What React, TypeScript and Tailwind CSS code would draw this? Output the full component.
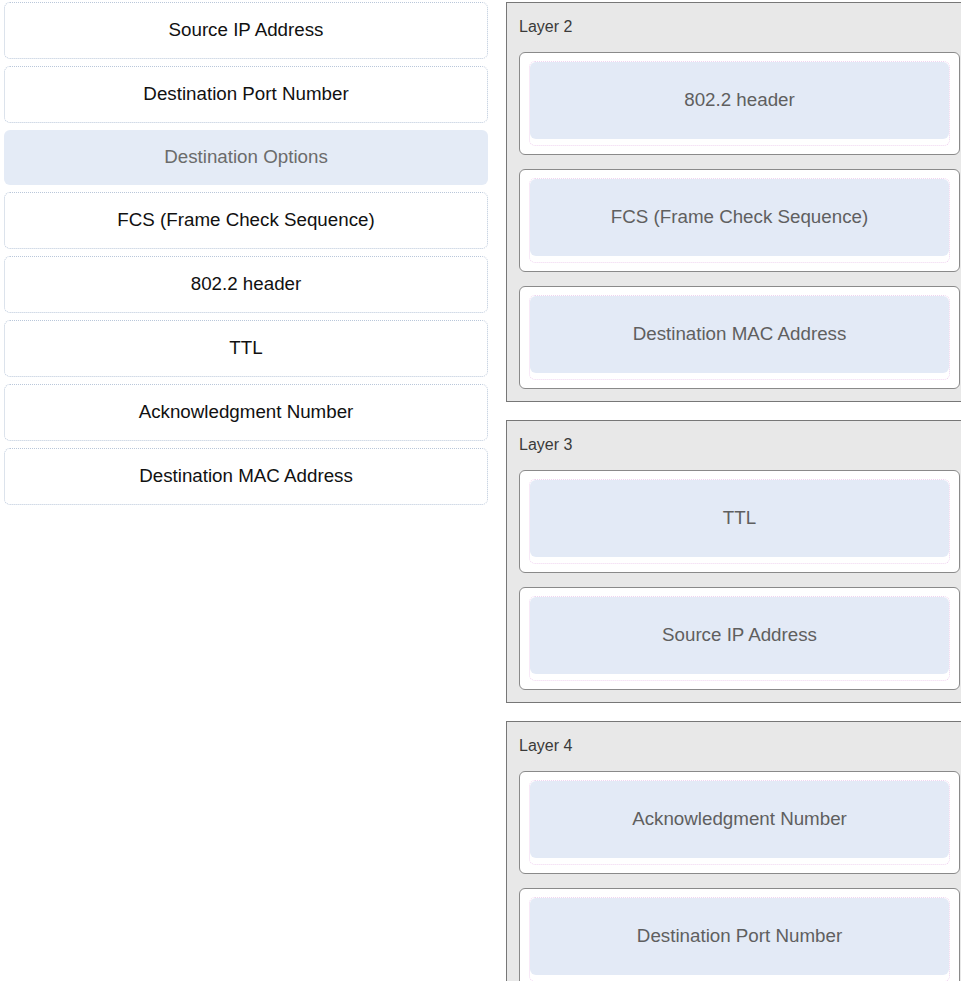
import React from "react";

const sourceItems = [
  { label: "Source IP Address" },
  { label: "Destination Port Number" },
  { label: "Destination Options", placed: true },
  { label: "FCS (Frame Check Sequence)" },
  { label: "802.2 header" },
  { label: "TTL" },
  { label: "Acknowledgment Number" },
  { label: "Destination MAC Address" },
];

const layers = [
  { name: "Layer 2", items: ["802.2 header", "FCS (Frame Check Sequence)", "Destination MAC Address"] },
  { name: "Layer 3", items: ["TTL", "Source IP Address"] },
  { name: "Layer 4", items: ["Acknowledgment Number", "Destination Port Number"] },
];

function DropCard({ label }: { label: string }) {
  return (
    <div className="h-[103px] rounded-[6px] border border-[#8a8a8a] bg-white px-[9px] pt-[8px]">
      <div className="h-[85px] rounded-[6px] border border-dotted border-[#f0d4f0]">
        <div className="flex h-[77px] items-center justify-center rounded-[6px] bg-[#e3eaf6] text-[18.75px] text-[#5f5f5f]">
          {label}
        </div>
      </div>
    </div>
  );
}

export default function App() {
  return (
    <div className="flex h-[981px] w-[961px] overflow-hidden bg-white font-['Liberation_Sans',Arial,sans-serif]">
      {/* Source list */}
      <div className="flex w-[488px] shrink-0 flex-col gap-[7px] pl-[4px] pt-[2px]">
        {sourceItems.map((item) =>
          item.placed ? (
            <div
              key={item.label}
              className="flex h-[55px] items-center justify-center rounded-[6px] bg-[#e4ebf6] text-[18.75px] text-[#6b6b6b]"
            >
              {item.label}
            </div>
          ) : (
            <div
              key={item.label}
              className="flex h-[57px] items-center justify-center rounded-[6px] border border-dotted border-[#b9c7da] bg-white text-[18.75px] text-[#111]"
            >
              {item.label}
            </div>
          )
        )}
      </div>

      {/* Target layers */}
      <div className="ml-[18px] flex w-[467px] shrink-0 flex-col gap-[18px] pt-[2px]">
        {layers.map((layer) => (
          <div key={layer.name} className="border border-[#777] bg-[#e8e8e8] px-[12px] pb-[12px] pt-[12px]">
            <div className="mb-[13px] h-[24px] text-[16px] leading-[24px] text-[#3a3a3a]">{layer.name}</div>
            <div className="flex flex-col gap-[14px]">
              {layer.items.map((label) => (
                <DropCard key={label} label={label} />
              ))}
            </div>
          </div>
        ))}
      </div>
    </div>
  );
}
